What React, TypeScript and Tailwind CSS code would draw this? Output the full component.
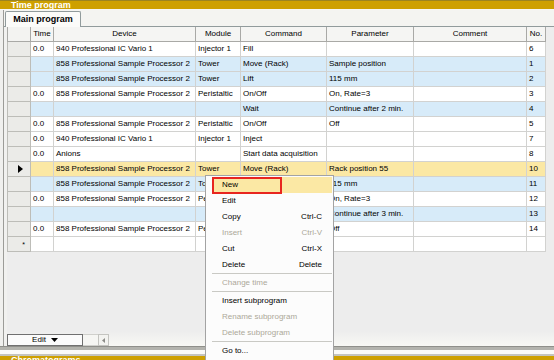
import React from 'react';

type Tone = 'w' | 'b' | 'y';
type Row = {
  mark?: 'cur' | 'new';
  time?: string;
  device?: string;
  module?: string;
  command?: string;
  param?: string;
  comment?: string;
  no?: string;
  tone: Tone;
};

const SSP = '858 Professional Sample Processor 2';
const IC = '940 Professional IC Vario 1';

const rows: Row[] = [
  { time: '0.0', device: IC, module: 'Injector 1', command: 'Fill', no: '6', tone: 'w' },
  { device: SSP, module: 'Tower', command: 'Move (Rack)', param: 'Sample position', no: '1', tone: 'b' },
  { device: SSP, module: 'Tower', command: 'Lift', param: '115 mm', no: '2', tone: 'b' },
  { time: '0.0', device: SSP, module: 'Peristaltic', command: 'On/Off', param: 'On, Rate=3', no: '3', tone: 'w' },
  { command: 'Wait', param: 'Continue after 2 min.', no: '4', tone: 'b' },
  { time: '0.0', device: SSP, module: 'Peristaltic', command: 'On/Off', param: 'Off', no: '5', tone: 'w' },
  { time: '0.0', device: IC, module: 'Injector 1', command: 'Inject', no: '7', tone: 'w' },
  { time: '0.0', device: 'Anions', command: 'Start data acquisition', no: '8', tone: 'w' },
  { mark: 'cur', device: SSP, module: 'Tower', command: 'Move (Rack)', param: 'Rack position 55', no: '10', tone: 'y' },
  { device: SSP, module: 'Tower', command: 'Lift', param: '115 mm', no: '11', tone: 'b' },
  { time: '0.0', device: SSP, module: 'Peristaltic', command: 'On/Off', param: 'On, Rate=3', no: '12', tone: 'w' },
  { command: 'Wait', param: 'Continue after 3 min.', no: '13', tone: 'b' },
  { time: '0.0', device: SSP, module: 'Peristaltic', command: 'On/Off', param: 'Off', no: '14', tone: 'w' },
  { mark: 'new', tone: 'w' },
];

const toneBg: Record<Tone, string> = {
  w: 'bg-white',
  b: 'bg-[#d7ebf9]',
  y: 'bg-[#fbe8a4]',
};

// widths after the row header column
const cols = ['w-[23px]', 'w-[142px]', 'w-[45px]', 'w-[86px]', 'w-[87px]', 'w-[113px]', 'w-[19px]'];
const heads = ['Time', 'Device', 'Module', 'Command', 'Parameter', 'Comment', 'No.'];

type Item = { l?: string; s?: string; d?: boolean; hl?: boolean; sep?: boolean };
const menu: Item[] = [
  { l: 'New', hl: true },
  { l: 'Edit' },
  { l: 'Copy', s: 'Ctrl-C' },
  { l: 'Insert', s: 'Ctrl-V', d: true },
  { l: 'Cut', s: 'Ctrl-X' },
  { l: 'Delete', s: 'Delete' },
  { sep: true },
  { l: 'Change time', d: true },
  { sep: true },
  { l: 'Insert subprogram' },
  { l: 'Rename subprogram', d: true },
  { l: 'Delete subprogram', d: true },
  { sep: true },
  { l: 'Go to...' },
];

const ContextMenu = () => (
  <div className="absolute left-[205px] top-[175px] w-[129px] h-[200px] bg-[#fcfcfc] border border-[#a3a3a3] pt-[1px]">
    {menu.map((m, i) =>
      m.sep ? (
        <div key={i} className="h-[2px] ml-[6px] mr-[1px] border-t border-[#c9c9c4]" />
      ) : (
        <div
          key={i}
          className={`h-[16px] ml-[6px] mr-[1px] pl-[10px] pr-[10px] flex items-center justify-between ${
            m.hl ? 'bg-[#fbe8a4]' : ''
          } ${m.d ? 'text-[#aca899]' : 'text-black'}`}
        >
          <span>{m.l}</span>
          {m.s && <span>{m.s}</span>}
        </div>
      )
    )}
    <div className="absolute left-[6px] top-[1px] w-[70px] h-[17px] border-2 border-[#e8261f]" />
  </div>
);

const App: React.FC = () => {
  return (
    <div className="relative w-[554px] h-[360px] overflow-hidden bg-[#f0f0ee] font-['Liberation_Sans',Arial,sans-serif] text-[8px] text-black">
      {/* title */}
      <div className="h-[9px] bg-[#cea000] border-t border-[#9c8420] pl-[11px] text-[9px] leading-[8px] font-bold text-white">
        Time program
      </div>
      <div className="h-[1px] bg-[#f7f7f4]" />

      <div className="ml-[3px] h-[336px] border-l border-[#9c9c98] flex flex-col">
        {/* tab strip */}
        <div className="h-[17px] pt-[1px] pl-[1px] flex border-b border-[#919b9c] bg-[#f4f4f1]">
          <div className="w-[76px] h-[16px] -mb-px relative bg-[#fbfbf9] border border-b-0 border-[#919b9c] rounded-t-[2px] flex items-center justify-center text-[9px] font-bold">
            Main program
          </div>
        </div>

        <div className="flex-1 pl-[3px] flex flex-col bg-[#f1f1ef]">
          <div className="flex-1 flex flex-col bg-[#ededed]">
            {/* header */}
            <div className="flex h-[15px]">
              <div className="w-[24px] bg-[#f3f3f1] border-l border-r border-b border-[#a9a9a6]" />
              {heads.map((h, i) => (
                <div
                  key={h}
                  className={`${cols[i]} bg-[#f5f5f3] border-r border-b border-[#a9a9a6] flex items-center justify-center`}
                >
                  {h}
                </div>
              ))}
            </div>
            {/* rows */}
            {rows.map((r, ri) => {
              const vals = [r.time, r.device, r.module, r.command, r.param, r.comment, r.no];
              return (
                <div key={ri} className="flex h-[15px]">
                  <div className="w-[24px] bg-[#ebebe8] border-l border-r border-b border-[#bdbdb8] flex items-center justify-end">
                    {r.mark === 'cur' && (
                      <svg width="5" height="8" viewBox="0 0 5 8" className="mr-[7px]">
                        <polygon points="0,0 5,4 0,8" fill="#000" />
                      </svg>
                    )}
                    {r.mark === 'new' && <span className="mr-[5px] text-[7px] leading-none">*</span>}
                  </div>
                  {vals.map((v, ci) => (
                    <div
                      key={ci}
                      className={`${cols[ci]} ${toneBg[r.tone]} border-r border-b border-[#d2d2d0] flex items-center pl-[2px] whitespace-nowrap overflow-hidden`}
                    >
                      {v}
                    </div>
                  ))}
                </div>
              );
            })}
            <div className="flex-1" />
          </div>

          {/* bottom bar */}
          <div className="h-[15px] pt-[3px] flex bg-gradient-to-b from-[#ededed] to-[#f8f8f4]">
            <div className="w-[76px] h-[12px] bg-[#fbfbfb] border border-[#707070] flex items-center justify-center gap-[5px]">
              <span>Edit</span>
              <svg width="7" height="4" viewBox="0 0 7 4">
                <polygon points="0,0 7,0 3.5,4" fill="#000" />
              </svg>
            </div>
            <div className="w-[15px] h-[12px] bg-[#f6f6f3] border-y border-[#d0d0cc]" />
            <div className="w-[11px] h-[12px] bg-[#f3f3f0] border border-[#c4c4c0] flex items-center justify-center">
              <svg width="3" height="5" viewBox="0 0 3 5">
                <polygon points="3,0 3,5 0,2.5" fill="#8c8c88" />
              </svg>
            </div>
          </div>
        </div>
      </div>

      {/* bottom chrome */}
      <div className="h-[4px] bg-[#b3b3ad] border-t border-[#8f8f8a]" />
      <div className="h-[4px] bg-[#fafaf8]" />
      <div className="h-[2px] bg-[#c4c4bf]" />
      <div className="h-[9px] bg-[#cea000] pl-[11px] text-[9px] leading-[8px] font-bold text-white">
        Chromatograms
      </div>

      <ContextMenu />
    </div>
  );
};

export default App;
